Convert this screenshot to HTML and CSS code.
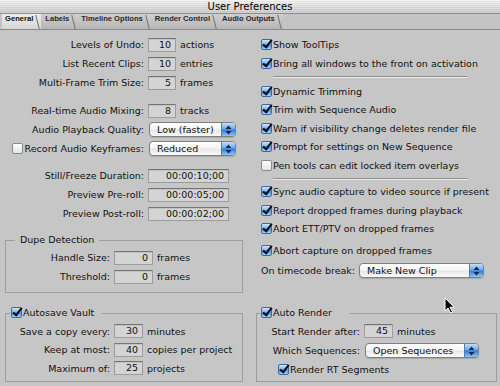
FILE: index.html
```html
<!DOCTYPE html>
<html>
<head>
    <title>User Preferences</title>
    <link rel="stylesheet" href="styles.css">
</head>
<body>
    <div class="window">
        <div class="titlebar">User Preferences</div>

        <div class="tabs">
            <span class="tab active">General</span>
            <span class="tab">Labels</span>
            <span class="tab">Timeline Options</span>
            <span class="tab">Render Control</span>
            <span class="tab">Audio Outputs</span>
        </div>

        <div class="content">
            <!-- Left column -->
            <div class="col left">
                <div class="block">
                    <div class="row"><span class="lbl">Levels of Undo:</span><span class="field w28">10</span><span class="unit">actions</span></div>
                    <div class="row"><span class="lbl">List Recent Clips:</span><span class="field w28">10</span><span class="unit">entries</span></div>
                    <div class="row"><span class="lbl">Multi-Frame Trim Size:</span><span class="field w28">5</span><span class="unit">frames</span></div>
                </div>

                <div class="block gap9">
                    <div class="row"><span class="lbl">Real-time Audio Mixing:</span><span class="field w28">8</span><span class="unit">tracks</span></div>
                    <div class="row">
                        <span class="lbl">Audio Playback Quality:</span>
                        <span class="popup w87">Low (faster)<span class="step"><svg width="7" height="10" viewBox="0 0 7 10"><path d="M3.5 0.5 L6.5 4 L0.5 4 Z M0.5 6 L6.5 6 L3.5 9.5 Z" fill="#14284a"/></svg></span></span>
                    </div>
                    <div class="row">
                        <span class="lbl"><span class="cb"></span>Record Audio Keyframes:</span>
                        <span class="popup w87">Reduced<span class="step"><svg width="7" height="10" viewBox="0 0 7 10"><path d="M3.5 0.5 L6.5 4 L0.5 4 Z M0.5 6 L6.5 6 L3.5 9.5 Z" fill="#14284a"/></svg></span></span>
                    </div>
                </div>

                <div class="block gap8">
                    <div class="row"><span class="lbl">Still/Freeze Duration:</span><span class="field w81">00:00:10;00</span></div>
                    <div class="row"><span class="lbl">Preview Pre-roll:</span><span class="field w81">00:00:05;00</span></div>
                    <div class="row"><span class="lbl">Preview Post-roll:</span><span class="field w81">00:00:02;00</span></div>
                </div>

                <fieldset class="group dupe">
                    <legend>Dupe Detection</legend>
                    <div class="row"><span class="glbl">Handle Size:</span><span class="field w39">0</span><span class="unit">frames</span></div>
                    <div class="row"><span class="glbl">Threshold:</span><span class="field w39">0</span><span class="unit">frames</span></div>
                </fieldset>

                <fieldset class="group autosave">
                    <legend><span class="cb on"></span>Autosave Vault</legend>
                    <div class="row short"><span class="glbl">Save a copy every:</span><span class="field w29">30</span><span class="unit">minutes</span></div>
                    <div class="row short"><span class="glbl">Keep at most:</span><span class="field w29">40</span><span class="unit">copies per project</span></div>
                    <div class="row short"><span class="glbl">Maximum of:</span><span class="field w29">25</span><span class="unit">projects</span></div>
                </fieldset>
            </div>

            <!-- Right column -->
            <div class="col right">
                <div class="check-row tall"><span class="cb on"></span>Show ToolTips</div>
                <div class="check-row tall"><span class="cb on"></span>Bring all windows to the front on activation</div>
                <div class="sep first"></div>
                <div class="check-row"><span class="cb on"></span>Dynamic Trimming</div>
                <div class="check-row"><span class="cb on"></span>Trim with Sequence Audio</div>
                <div class="check-row"><span class="cb on"></span>Warn if visibility change deletes render file</div>
                <div class="check-row"><span class="cb on"></span>Prompt for settings on New Sequence</div>
                <div class="check-row"><span class="cb"></span>Pen tools can edit locked item overlays</div>
                <div class="sep second"></div>
                <div class="check-row"><span class="cb on"></span>Sync audio capture to video source if present</div>
                <div class="check-row"><span class="cb on"></span>Report dropped frames during playback</div>
                <div class="check-row"><span class="cb on"></span>Abort ETT/PTV on dropped frames</div>
                <div class="check-row spaced"><span class="cb on"></span>Abort capture on dropped frames</div>
                <div class="row timecode">
                    <span>On timecode break:</span>
                    <span class="popup w125">Make New Clip<span class="step"><svg width="7" height="10" viewBox="0 0 7 10"><path d="M3.5 0.5 L6.5 4 L0.5 4 Z M0.5 6 L6.5 6 L3.5 9.5 Z" fill="#14284a"/></svg></span></span>
                </div>

                <fieldset class="group render">
                    <legend><span class="cb on"></span>Auto Render</legend>
                    <div class="row r18"><span class="rlbl">Start Render after:</span><span class="field w29">45</span><span class="unit">minutes</span></div>
                    <div class="row r21"><span class="rlbl">Which Sequences:</span><span class="popup w114">Open Sequences<span class="step"><svg width="7" height="10" viewBox="0 0 7 10"><path d="M3.5 0.5 L6.5 4 L0.5 4 Z M0.5 6 L6.5 6 L3.5 9.5 Z" fill="#14284a"/></svg></span></span></div>
                    <div class="check-row r16 indent"><span class="cb on"></span>Render RT Segments</div>
                </fieldset>
            </div>
        </div>

        <svg class="cursor" width="12" height="17" viewBox="0 0 12 17">
            <path d="M1 1 L1 14 L4 11 L6.5 16 L8.5 15 L6 10.2 L10.3 10.2 Z" fill="#000" stroke="#fff" stroke-width="1"/>
        </svg>
    </div>
</body>
</html>
```

FILE: styles.css
```css
body {
    margin: 0;
    background: #c6c6c6;
    font-family: "DejaVu Sans", sans-serif;
    font-size: 9.5px;
    color: #111;
}

.window { width: 500px; height: 386px; position: relative; overflow: hidden; background: #c6c6c6; }

.titlebar {
    height: 13px;
    line-height: 13px;
    border-bottom: 1px solid #8d8d8d;
    text-align: center;
    font-size: 10px;
    color: #000;
    background:
        linear-gradient(rgba(255,255,255,0.2), rgba(0,0,0,0.14)),
        repeating-linear-gradient(#f3f3f3 0 1px, #e3e3e3 1px 2px);
}

.tabs { display: flex; height: 15px; border-bottom: 1px solid #8a8a8a; padding-left: 2px; background: #c4c4c4; }
.tab { position: relative; padding: 0 8px 0 4px; line-height: 15px; font: bold 7.6px "Liberation Sans", sans-serif; color: #2a2a2a; background: linear-gradient(#cfcfcf, #b6b6b6); }
.tab:first-child { padding-left: 3px; }
.tab.active { background: linear-gradient(#ededed, #d6d6d6); color: #111; }
.tab::after { content: ""; position: absolute; right: 3px; top: 1px; bottom: 0; width: 1px; background: #707070; transform: skewX(14deg); }

.content { display: grid; grid-template-columns: 250px 250px; }
.col { padding-top: 5px; }
.right { padding-left: 11px; }

.row { display: flex; align-items: center; height: 19px; white-space: nowrap; }
.row.short { height: 18.5px; }
.gap9 { margin-top: 9px; }
.gap8 { margin-top: 8px; }

.lbl { width: 144px; flex: none; display: flex; justify-content: flex-end; align-items: center; }
.lbl .cb { margin-right: 2px; }
.glbl { width: 104px; flex: none; text-align: right; }
.rlbl { width: 103px; flex: none; text-align: right; }
.unit { margin-left: 4px; }

.field {
    height: 14px;
    box-sizing: border-box;
    margin-left: 4px;
    padding-right: 4px;
    line-height: 12px;
    text-align: right;
    background: #d4d4d4;
    border: 1px solid #9c9c9c;
    border-top-color: #747474;
    box-shadow: inset 0 1px 0 #c2c2c2;
}
.w28 { width: 28px; }
.w29 { width: 29px; }
.w39 { width: 39px; }
.w81 { width: 81px; }

.popup {
    display: flex;
    justify-content: space-between;
    height: 15px;
    box-sizing: border-box;
    margin-left: 5px;
    padding-left: 7px;
    line-height: 13px;
    border: 1px solid #7f7f7f;
    border-radius: 4px;
    overflow: hidden;
    background: linear-gradient(#ffffff, #f5f5f5 45%, #e7e7e7 55%, #fafafa);
    box-shadow: 0 1px 1px rgba(0,0,0,0.15);
}
.w87 { width: 87px; }
.w114 { width: 114px; }
.w125 { width: 125px; }
.step {
    width: 13px;
    display: flex;
    align-items: center;
    justify-content: center;
    border-left: 1px solid #4f7db8;
    background: linear-gradient(#c3defb, #6aa6ec 48%, #2f7ad9 52%, #8ec4f8);
}

.cb {
    position: relative;
    display: inline-block;
    width: 11px;
    height: 11px;
    box-sizing: border-box;
    flex: none;
    border: 1px solid #8a8a8a;
    border-radius: 2px;
    background: linear-gradient(#ffffff, #e4e4e4);
    vertical-align: -2px;
}
.cb.on { border-color: #3d68a6; background: linear-gradient(#d2e7fc, #79b2ef 48%, #3a86e0 52%, #a6d4fb); }
.cb.on::after {
    content: "";
    position: absolute;
    left: 3px;
    top: -2px;
    width: 3px;
    height: 8px;
    border: solid #0c0c0c;
    border-width: 0 2px 2px 0;
    transform: rotate(38deg);
}

.check-row { display: flex; align-items: center; height: 18.5px; white-space: nowrap; }
.check-row .cb { margin-right: 1px; }
.check-row.tall { height: 19px; }
.check-row.spaced { margin-top: 3.5px; }

.sep { width: 194px; margin-left: 12px; border-top: 1px solid #8f8f8f; border-bottom: 1px solid #ececec; }
.sep.first { margin-top: 3px; margin-bottom: 4px; }
.sep.second { margin-top: 3.5px; margin-bottom: 2.5px; }

.timecode { height: 21px; }
.timecode .popup { margin-left: 4px; }

.group { margin: 0; padding: 0 0 3px; border: 1px solid #9d9d9d; min-width: 0; }
.group legend { padding: 0 5px; line-height: 12px; white-space: nowrap; }
.group legend .cb { margin-right: 1px; }

.dupe { margin: 11px 7px 0 5px; padding: 2px 0 6px; }
.dupe legend { margin-left: 9px; }

.autosave { margin: 14px 7px 0 5px; padding: 3px 0 3px; }
.autosave legend { margin-left: 4px; padding: 0 8px 0 1px; }

.render { margin: 26px 3px 0 -5px; padding: 3px 0 3.5px; }
.render legend { margin-left: 3px; padding: 0 18px 0 1px; }
.render .field { margin-left: 4px; }
.render .popup { margin-left: 5px; }
.r18 { height: 18px; }
.r21 { height: 21px; }
.r16 { height: 16px; }
.indent { padding-left: 21px; }

.cursor { position: absolute; left: 444px; top: 297px; }
```
